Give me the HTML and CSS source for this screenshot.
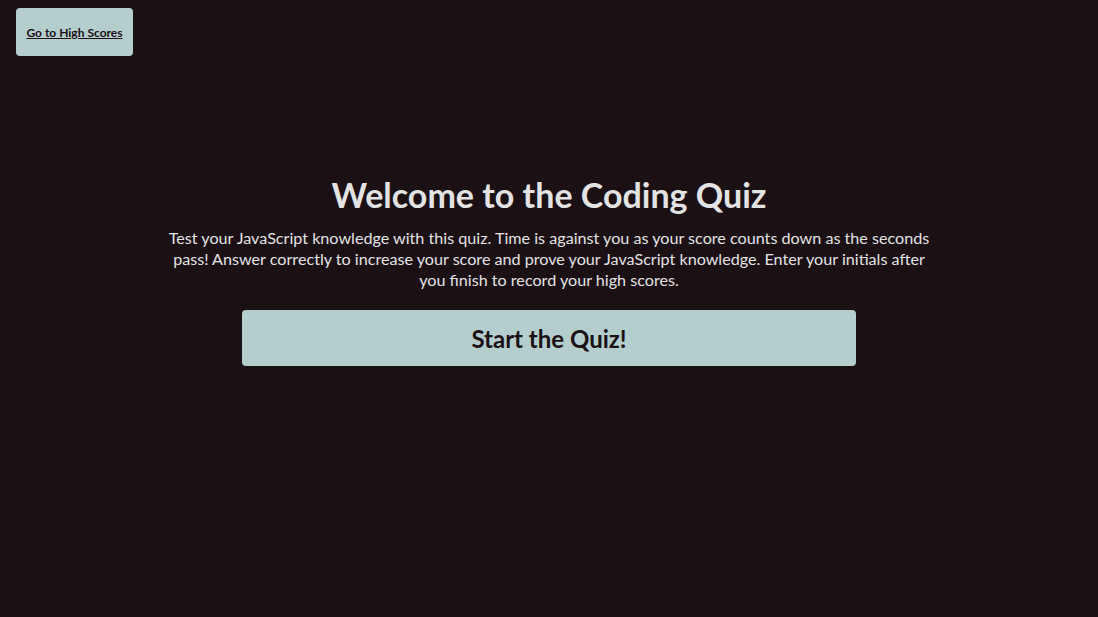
FILE: index.html
```html
<!DOCTYPE html>
<html lang="en">
<head>
<meta charset="utf-8">
<title>Coding Quiz</title>
<link rel="stylesheet" href="styles.css">
</head>
<body>
<header class="top">
  <button class="scores-btn"><a href="#">Go to High Scores</a></button>
</header>
<main class="intro">
  <h1 class="title">Welcome to the Coding Quiz</h1>
  <p class="lead">Test your JavaScript knowledge with this quiz. Time is against you as your score counts down as the seconds pass! Answer correctly to increase your score and prove your JavaScript knowledge. Enter your initials after you finish to record your high scores.</p>
  <button class="start-btn">Start the Quiz!</button>
</main>
</body>
</html>
```

FILE: styles.css
```css
html, body {
  margin: 0;
  padding: 0;
  height: 100%;
}
body {
  background: #1b1115;
  color: #e3e3e3;
  font-family: Lato, "Noto Sans", sans-serif;
}
.top {
  padding: 8px 16px;
  display: flex;
}
.scores-btn {
  width: 117px;
  height: 48px;
  background: #b4cdcd;
  border: none;
  border-radius: 4px;
  padding: 0;
  font-family: inherit;
  font-size: 12px;
  font-weight: 700;
}
.scores-btn a {
  color: #1b1115;
}
.intro {
  display: flex;
  flex-direction: column;
  align-items: center;
  margin-top: 111px;
}
.title {
  margin: 0;
  font-size: 34px;
  line-height: 40px;
  font-weight: 700;
}
.lead {
  width: 770px;
  margin: 12px 0 20px;
  text-align: center;
  font-size: 16.15px;
  line-height: 21px;
}
.start-btn {
  width: 614px;
  height: 56px;
  background: #b4cdcd;
  border: none;
  border-radius: 4px;
  font-family: inherit;
  font-size: 24px;
  font-weight: 700;
  color: #1b1115;
}
```
